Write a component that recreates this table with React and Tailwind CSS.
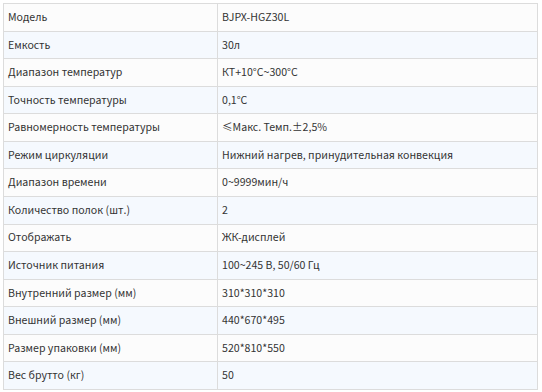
import React from "react";

const rows = [
  ["Модель", "BJPX-HGZ30L"],
  ["Емкость", "30л"],
  ["Диапазон температур", "КТ+10°C~300°C"],
  ["Точность температуры", "0,1°C"],
  ["Равномерность температуры", "≤Макс. Темп.±2,5%"],
  ["Режим циркуляции", "Нижний нагрев, принудительная конвекция"],
  ["Диапазон времени", "0~9999мин/ч"],
  ["Количество полок (шт.)", "2"],
  ["Отображать", "ЖК-дисплей"],
  ["Источник питания", "100~245 В, 50/60 Гц"],
  ["Внутренний размер (мм)", "310*310*310"],
  ["Внешний размер (мм)", "440*670*495"],
  ["Размер упаковки (мм)", "520*810*550"],
  ["Вес брутто (кг)", "50"],
];

export default function App() {
  return (
    <div className="w-[542px] h-[392px] bg-white pt-[3px] pl-[3px] font-['Noto_Sans_CJK_SC',sans-serif] text-[10.6px] text-[#333]">
      <table className="w-[535px] border-collapse">
        <tbody>
          {rows.map(([k, v], i) => (
            <tr key={i} className={i % 2 === 0 ? "bg-[#fcfcfc]" : "bg-[#f5f9fe]"}>
              <td className="w-[214px] h-[27.57px] border border-[#dcdcdc] px-[4px] py-0 leading-none">{k}</td>
              <td className="h-[27.57px] border border-[#dcdcdc] px-[4px] py-0 leading-none">{v}</td>
            </tr>
          ))}
        </tbody>
      </table>
    </div>
  );
}
